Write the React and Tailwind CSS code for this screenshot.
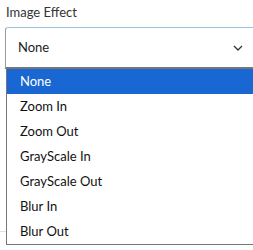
const options = ["None", "Zoom In", "Zoom Out", "GrayScale In", "GrayScale Out", "Blur In", "Blur Out"];

export default function App() {
  return (
    <div className="relative w-[253px] h-[250px] overflow-hidden bg-white font-['Lato',sans-serif]">
      <div className="pt-[2px] pl-[6px] text-[13px] leading-[20px] text-[#333]">Image Effect</div>
      <div className="mt-[5px] ml-[5px] w-[270px] h-[42px] flex items-center rounded-tl-[3px] border border-[#9a9a9a] border-t-[#9ec3dc] border-b-2 border-b-[#777] bg-white">
        <span className="flex-1 pl-[12px] text-[13px] text-[#222]">None</span>
        <svg className="mr-[31px]" width="10" height="6" viewBox="0 0 10 6" fill="none">
          <path d="M1 1l4 4 4-4" stroke="#333" strokeWidth="1.3" />
        </svg>
      </div>
      <div className="absolute left-0 top-[231px] w-[6px] h-px bg-[#e2e2e2]" />
      <div className="absolute left-[6px] top-[68px] w-[260px] border border-[#767676] bg-white">
        {options.map((o, i) => (
          <div
            key={o}
            className={
              "h-[25px] flex items-center pl-[13px] text-[13px] " +
              (i === 0 ? "bg-[#1967d2] text-white" : "text-[#111]")
            }
          >
            {o}
          </div>
        ))}
      </div>
    </div>
  );
}
